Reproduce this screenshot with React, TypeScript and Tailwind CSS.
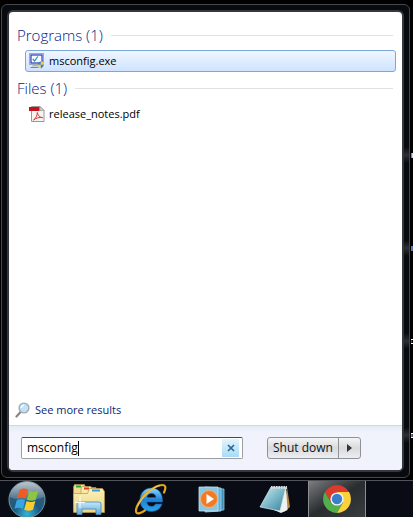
import React, { useState } from 'react';

interface ResultItem {
  name: string;
  icon: React.ReactNode;
  selected?: boolean;
}

const MsconfigIcon = () => (
  <svg width="16" height="16" viewBox="0 0 16 16" className="shrink-0">
    <rect x=".5" y=".5" width="14" height="11" fill="#dfe3ea" stroke="#a5a9b0" />
    <rect x="2" y="2" width="11" height="8" fill="#f8fbfe" stroke="#1b2cc0" strokeWidth="1.100" />
    <path d="M3.800 6l1.800 2 3.200-4.500" fill="none" stroke="#2c8fb5" strokeWidth="1.200" />
    <path d="M4 12h5v1.500H2.500z" fill="#b4b8be" />
    <path d="M1.500 14.500h8" stroke="#85898f" />
    <path d="M9 9.500l2.800-1.300v3.600H9z" fill="#3f7fd0" />
    <path d="M11.800 8.200l3 1.300v2.300h-3z" fill="#f6cf3c" />
    <path d="M9 11.800h2.800v3.700c-1.800-.8-2.800-2.200-2.800-3.700z" fill="#f6cf3c" />
    <path d="M11.800 11.800h3c0 1.500-1.200 2.900-3 3.700z" fill="#3f7fd0" />
  </svg>
);

const PdfIcon = () => (
  <svg width="16" height="16" viewBox="0 0 16 16" className="shrink-0">
    <path d="M2.500.5h8.500l4 4v11H2.500z" fill="#f4f4f4" stroke="#9a9a9a" />
    <path d="M11 .5v4h4z" fill="#d5d5d5" stroke="#9a9a9a" strokeWidth=".7" />
    <rect x="0" y="1" width="10.500" height="4" fill="#c4141b" />
    <path d="M8.300 6.500c.6 3.200 2.700 5 5.400 5.200-3-.8-6.800.3-9.200 2.300 2.300-1.500 3.800-4.500 3.800-7.500z" fill="none" stroke="#e0382e" strokeWidth="1" strokeLinejoin="round" />
  </svg>
);

const SearchIcon = () => (
  <svg width="16" height="16" viewBox="0 0 16 16" className="shrink-0">
    <path d="M1.500 14.500L5.800 9.800" stroke="#8a8580" strokeWidth="2.200" strokeLinecap="round" />
    <circle cx="9" cy="6" r="4.900" fill="#bfe2f8" stroke="#a3a9b0" strokeWidth="1.400" />
    <path d="M6.200 6A2.800 2.800 0 0 1 9 3.200" fill="none" stroke="#fff" strokeWidth="1.400" />
  </svg>
);

const StartOrb = () => (
  <svg width="42" height="37" viewBox="0 0 42 37">
    <defs>
      <radialGradient id="orb" cx=".5" cy=".9" r=".8">
        <stop offset="0" stopColor="#35b4d8" />
        <stop offset=".45" stopColor="#1b5a83" />
        <stop offset="1" stopColor="#3c5a70" />
      </radialGradient>
      <linearGradient id="orbShine" x1="0" y1="0" x2="0" y2="1">
        <stop offset="0" stopColor="#fff" stopOpacity=".65" />
        <stop offset="1" stopColor="#fff" stopOpacity=".12" />
      </linearGradient>
      <radialGradient id="orbGlow">
        <stop offset=".7" stopColor="#1c6a35" stopOpacity=".6" />
        <stop offset="1" stopColor="#0b1d20" stopOpacity="0" />
      </radialGradient>
    </defs>
    <circle cx="21" cy="18.500" r="21" fill="url(#orbGlow)" />
    <circle cx="21" cy="18.500" r="18" fill="url(#orb)" stroke="#7894a2" strokeWidth="1" />
    <path d="M4 16a17 15 0 0 1 34 0c-9 4-24 5-34 0z" fill="url(#orbShine)" />
    <path d="M13.500 9c3-2 5.500-2 8.500-.3l-2.400 9c-3-1.500-5.500-1.500-8.500.1z" fill="#ee5b24" />
    <path d="M23.300 9.700c3 1.500 5.500 1.500 8.900 0l-2.400 9c-3 1.500-5.800 1.400-8.900 0z" fill="#8dc63f" />
    <path d="M10.700 19.300c3-1.500 5.500-1.500 8.500-.1l-2.300 8.600c-3-1.500-5.500-1.500-8.500 0z" fill="#38a6e0" />
    <path d="M20.500 19.900c3 1.500 5.700 1.500 8.900 0L27 28.700c-3 1.500-5.700 1.400-8.800 0z" fill="#fccb2f" />
  </svg>
);

const ExplorerIcon = () => (
  <svg width="34" height="31" viewBox="0 0 34 31">
    <defs>
      <linearGradient id="folder" x1="0" y1="0" x2="0" y2="1">
        <stop offset="0" stopColor="#fbf1b8" />
        <stop offset="1" stopColor="#ecd487" />
      </linearGradient>
      <linearGradient id="stand" x1="0" y1="0" x2="0" y2="1">
        <stop offset="0" stopColor="#c5e8f8" />
        <stop offset="1" stopColor="#5ca9d8" />
      </linearGradient>
    </defs>
    <path d="M1.500 27V3l1-2.500h10l1 3H24V27z" fill="#f3dd8d" stroke="#a98c3f" strokeWidth=".7" />
    <rect x="4" y="1.500" width="5" height="2" fill="#27a242" />
    <path d="M9 27V5l1-2.500h9l1 3h10V27z" fill="#f8e9a6" stroke="#b3984b" strokeWidth=".7" />
    <rect x="12" y="3.500" width="5" height="2" fill="#d9402f" />
    <path d="M1.500 28.500V9.500h14l2-5h13l2 3v21z" fill="url(#folder)" stroke="#b3984b" strokeWidth=".7" />
    <rect x="20" y="5.500" width="8" height="2" fill="#3b97d8" />
    <path d="M5 30.500V20q0-2 2-2h20q2 0 2 2v10.500h-5V25H10v5.500z" fill="url(#stand)" stroke="#3f86b8" strokeWidth=".8" />
    <path d="M8 12v12M3 18.500h10" stroke="#fff" strokeWidth="1" opacity=".9" />
  </svg>
);

const IeIcon = () => (
  <svg width="34" height="32" viewBox="0 0 34 32">
    <defs>
      <linearGradient id="ie" x1="0" y1="0" x2="0" y2="1">
        <stop offset="0" stopColor="#8ddcfb" />
        <stop offset=".5" stopColor="#2080d6" />
        <stop offset="1" stopColor="#2ba4e8" />
      </linearGradient>
    </defs>
    <path
      d="M17.500 5C10.500 5 6 10 6 17s5 11.500 11.500 11.500c5 0 9-2.700 10.500-7.500h-6.500c-.8 1.500-2 2.300-4 2.300-2.800 0-4.500-1.700-4.700-4.300h15.700C29 10.500 24.500 5 17.500 5zm-4.600 9.500c.4-2.500 2-4 4.600-4s4.200 1.500 4.500 4z"
      fill="url(#ie)"
      stroke="#1260a8"
      strokeWidth=".6"
      fillRule="evenodd"
    />
    <path d="M30 9.500c2.200-4.500 1.800-7.500-1.700-7.500C20 2 7 14 3 23.500c-2 5-.8 7.500 2 6.800 2-.4 3.800-1.300 6-3" fill="none" stroke="#e2a51c" strokeWidth="2.200" strokeLinecap="round" />
    <path d="M26 2.500C18.500 4 7.500 14.500 3.800 23" fill="none" stroke="#f9dc72" strokeWidth=".8" />
  </svg>
);

const MediaPlayerIcon = () => (
  <svg width="28" height="28" viewBox="0 0 28 28">
    <path d="M9 3l17 1v21l-17 1z" fill="#3d8dbb" stroke="#8bc6e2" strokeWidth=".8" />
    <path d="M7 2l16 1v23l-16 1z" fill="#62acd2" stroke="#a9d8ec" strokeWidth=".8" />
    <path d="M1 2h19v24H1z" fill="#8cc5df" stroke="#c0e3f1" strokeWidth=".8" />
    <circle cx="11" cy="14" r="8.500" fill="#f27a23" stroke="#fbb27b" strokeWidth=".8" />
    <path d="M8.500 9l7.500 5-7.500 5z" fill="#fff" />
  </svg>
);

const NotepadIcon = () => (
  <svg width="32" height="30" viewBox="0 0 32 30">
    <defs>
      <linearGradient id="pad" x1="0" y1="0" x2="1" y2="1">
        <stop offset="0" stopColor="#d4edf3" />
        <stop offset=".5" stopColor="#7cb9ca" />
        <stop offset="1" stopColor="#357f95" />
      </linearGradient>
    </defs>
    <path d="M28 3l3 20-6 5z" fill="#b58a43" />
    <path d="M27 3l1.500 23-6.500 3-7-3z" fill="#f0f1ed" />
    <path d="M12 3h15l-6 24L1 23z" fill="url(#pad)" stroke="#d7edf3" strokeWidth=".7" />
    <path d="M12 3.500h16" stroke="#d4dadd" strokeWidth="3" strokeDasharray="1.500 1" />
  </svg>
);

const ChromeIcon = () => (
  <svg width="30" height="30" viewBox="0 0 30 30">
    <path d="M15 8h12.100A14 14 0 0 0 2.900 8L9 18.500z" fill="#db3b2b" />
    <path d="M2.900 8A14 14 0 0 0 15 29l6-10.500L9 18.500z" fill="#52b04a" />
    <path d="M15 8h12.100A14 14 0 0 1 15 29l6-10.500z" fill="#fcd23c" />
    <circle cx="15" cy="15" r="6.600" fill="#f3f7fb" />
    <circle cx="15" cy="15" r="5.200" fill="#3a7fcb" />
  </svg>
);

// Edges of the desktop shortcuts behind the start menu, with their glow on the glass
const shortcutEdges = [
  { position: 'top-[147px]', color: 'bg-linear-to-r from-[#2f62d8] to-white' },
  { position: 'top-[240px]', color: 'bg-linear-to-r from-[#c2600f] to-[#2f62d8]' },
  { position: 'top-[333px]', color: 'border-y border-white bg-linear-to-r from-[#a34a1c] to-black' },
  { position: 'top-[427px]', color: 'border-y border-white bg-linear-to-r from-[#c08a2a] to-[#12306b]' },
];

const ResultGroup: React.FC<{ title: string; items: ResultItem[] }> = ({ title, items }) => (
  <section>
    <div className="flex h-[30px] items-center gap-2 pr-[9px] pl-2">
      <h2 className="text-[15px] leading-5 font-light text-[#001c80]">{title}</h2>
      <div className="h-px flex-1 bg-[#e2e2e2]" />
    </div>
    <ul className="pr-[6px] pl-4">
      {items.map((item) => (
        <li key={item.name}>
          <button
            className={`flex h-[22px] w-full items-center gap-1 rounded-[3px] border px-[3px] text-left text-[11px] text-black ${
              item.selected ? 'border-[#7da7dc] bg-linear-to-b from-[#eff6ff] to-[#cfe3ff]' : 'border-transparent'
            }`}
          >
            {item.icon}
            {item.name}
          </button>
        </li>
      ))}
    </ul>
  </section>
);

export default function App() {
  const [query, setQuery] = useState('msconfig');

  return (
    <div className="relative flex min-h-screen flex-col overflow-hidden bg-black font-['Open_Sans','Noto_Sans',sans-serif] text-[11px]">
      {/* Start menu */}
      <div className="mt-1 mr-[3px] mb-[2px] ml-px flex flex-1 flex-col rounded-md border border-[#45494c] bg-[#070b0f] p-[5px]">
        <main className="flex flex-1 flex-col overflow-hidden rounded-md border-2 border-[#35393d] bg-white">
          <div className="flex flex-1 flex-col gap-px pt-2">
            <ResultGroup title="Programs (1)" items={[{ name: 'msconfig.exe', icon: <MsconfigIcon />, selected: true }]} />
            <ResultGroup title="Files (1)" items={[{ name: 'release_notes.pdf', icon: <PdfIcon /> }]} />
            <a href="#results" className="mt-auto mb-[7px] flex items-center gap-1 pl-[6px] text-[#0b1f78]">
              <SearchIcon />
              See more results
            </a>
          </div>

          <footer className="flex h-[45px] items-center gap-6 border-t border-[#ccd9ea] bg-linear-to-b from-[#e4ecf7] to-[#f0f3fb] to-15% pr-[41px] pl-3">
            <div className="flex h-[22px] flex-1 items-center rounded-xs border border-[#9a9da2] border-t-[#45484d] bg-white pr-[3px] pl-[5px]">
              <input
                aria-label="Search programs and files"
                value={query}
                onChange={(e) => setQuery(e.target.value)}
                className="field-sizing-content max-w-44 bg-transparent text-xs text-black caret-transparent outline-none"
              />
              <span className="h-[15px] w-px bg-black" />
              <button
                aria-label="Clear"
                onClick={() => setQuery('')}
                className="ml-auto flex h-[18px] w-[17px] items-center justify-center bg-linear-to-b from-[#e3f4fd] to-[#a9dbf6]"
              >
                <svg width="8" height="8" viewBox="0 0 8 8">
                  <path d="M1 1l6 6M7 1L1 7" stroke="#27649b" strokeWidth="1.600" />
                </svg>
              </button>
            </div>
            <div className="flex h-[22px] rounded-[3px] border border-[#8e9195] bg-linear-to-b from-[#f5f5f6] via-[#d9dadd] to-[#eceef1]">
              <button className="w-[71px] border-r border-[#8e9195] text-center text-xs text-[#111]">Shut down</button>
              <button aria-label="Shut down options" className="flex w-[21px] items-center justify-center">
                <svg width="5" height="8" viewBox="0 0 5 8">
                  <path d="M0 0l5 4-5 4z" fill="#333" />
                </svg>
              </button>
            </div>
          </footer>
        </main>
      </div>

      {shortcutEdges.map(({ position, color }) => (
        <div key={position} className={`absolute right-0 flex w-[9px] items-center justify-between ${position}`}>
          <span className="h-4 w-[5px] bg-linear-to-b from-transparent via-white/15 to-transparent" />
          <span className={`h-[5px] w-[2px] ${color}`} />
        </div>
      ))}

      {/* Taskbar */}
      <nav className="flex h-[37px] items-center border-t border-[#50545a] bg-[#090c14]">
        <button aria-label="Start" className="ml-[6px] flex w-[52px]"><StartOrb /></button>
        <button aria-label="Windows Explorer" className="flex w-[62px] justify-center"><ExplorerIcon /></button>
        <button aria-label="Internet Explorer" className="flex w-[62px] justify-center"><IeIcon /></button>
        <button aria-label="Media Player" className="flex w-[60px] justify-center"><MediaPlayerIcon /></button>
        <button aria-label="Notepad" className="flex w-[66px] justify-center"><NotepadIcon /></button>
        <button
          aria-label="Chrome"
          className="flex h-full w-[58px] items-center justify-center border-x border-[#8b8f93] bg-linear-to-br from-[#7c7e80] via-[#2a2d30] to-[#3a3d40]"
        >
          <ChromeIcon />
        </button>
      </nav>
    </div>
  );
}
